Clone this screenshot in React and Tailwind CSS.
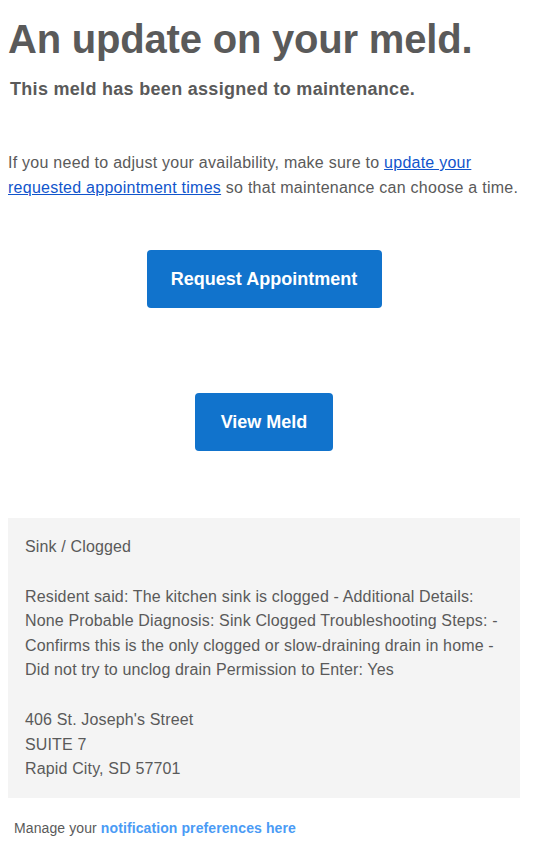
export default function App() {
  return (
    <div className="bg-white min-h-screen px-2 pt-4 text-[#5a5a5a] font-['Liberation_Sans',Arial,sans-serif]">
      <div className="w-[512px]">
        {/* header */}
        <h1 className="text-[40px] font-bold leading-[46px] tracking-[-0.2px]">An update on your meld.</h1>
        <h2 className="mt-[16px] text-[18px] font-bold leading-[22px] pl-[2px] tracking-[0.3px]">
          This meld has been assigned to maintenance.
        </h2>

        <p className="mt-[50px] text-[16px] leading-[25px] tracking-[0.25px]">
          If you need to adjust your availability, make sure to{" "}
          <a href="#" className="text-[#1155cc] underline">
            update your requested appointment times
          </a>{" "}
          so that maintenance can choose a time.
        </p>

        {/* buttons */}
        <div className="flex justify-center mt-[50px]">
          <a
            href="#"
            className="flex items-center justify-center w-[235px] h-[58px] rounded bg-[#1173cc] text-white text-[18px] font-bold"
          >
            Request Appointment
          </a>
        </div>
        <div className="flex justify-center mt-[85px]">
          <a
            href="#"
            className="flex items-center justify-center w-[138px] h-[58px] rounded bg-[#1173cc] text-white text-[18px] font-bold"
          >
            View Meld
          </a>
        </div>

        {/* meld details */}
        <div className="mt-[67px] bg-[#f4f4f4] px-[17px] pt-[17px] pb-[16px] text-[16px] leading-[24.6px] tracking-[0.15px]">
          <p>Sink / Clogged</p>
          <p className="mt-[25px]">
            Resident said: The kitchen sink is clogged - Additional Details: None Probable
            Diagnosis: Sink Clogged Troubleshooting Steps: - Confirms this is the only clogged or
            slow-draining drain in home - Did not try to unclog drain Permission to Enter: Yes
          </p>
          <p className="mt-[25px]">
            406 St. Joseph's Street
            <br />
            SUITE 7
            <br />
            Rapid City, SD 57701
          </p>
        </div>

        <p className="mt-[20px] pl-[6px] text-[14px] tracking-[0.1px]">
          Manage your{" "}
          <a href="#" className="text-[#4a9bf5] font-bold">
            notification preferences here
          </a>
        </p>
      </div>
    </div>
  );
}
